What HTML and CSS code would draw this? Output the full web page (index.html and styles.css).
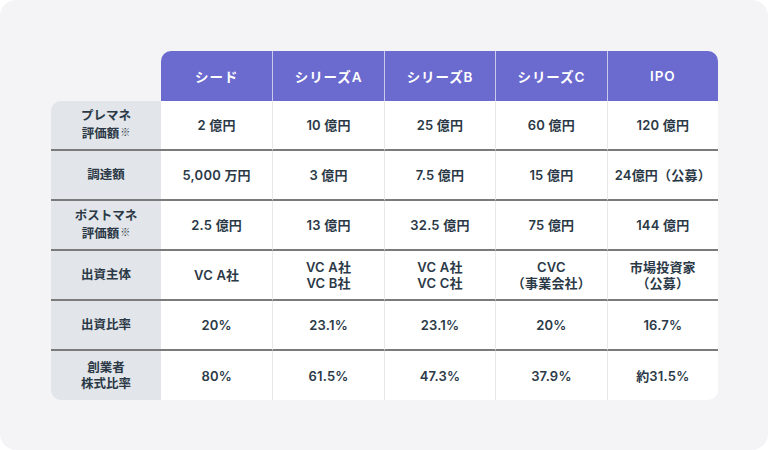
FILE: index.html
```html
<!DOCTYPE html>
<html lang="ja">
<head>
<meta charset="utf-8">
<link rel="stylesheet" href="styles.css">
</head>
<body>
<div class="panel">
  <div class="table">
    <div class="corner"></div>
    <div class="th first">シード</div>
    <div class="th">シリーズA</div>
    <div class="th">シリーズB</div>
    <div class="th">シリーズC</div>
    <div class="th last">IPO</div>

    <div class="lb top"><p>プレマネ<br>評価額<span class="note">※</span></p></div>
    <div class="td">2 億円</div>
    <div class="td">10 億円</div>
    <div class="td">25 億円</div>
    <div class="td">60 億円</div>
    <div class="td">120 億円</div>

    <div class="lb"><p>調達額</p></div>
    <div class="td">5,000 万円</div>
    <div class="td">3 億円</div>
    <div class="td">7.5 億円</div>
    <div class="td">15 億円</div>
    <div class="td">24億円（公募）</div>

    <div class="lb"><p>ポストマネ<br>評価額<span class="note">※</span></p></div>
    <div class="td">2.5 億円</div>
    <div class="td">13 億円</div>
    <div class="td">32.5 億円</div>
    <div class="td">75 億円</div>
    <div class="td">144 億円</div>

    <div class="lb"><p>出資主体</p></div>
    <div class="td">VC A社</div>
    <div class="td"><p>VC A社<br>VC B社</p></div>
    <div class="td"><p>VC A社<br>VC C社</p></div>
    <div class="td"><p>CVC<br>（事業会社）</p></div>
    <div class="td"><p>市場投資家<br>（公募）</p></div>

    <div class="lb"><p>出資比率</p></div>
    <div class="td">20%</div>
    <div class="td">23.1%</div>
    <div class="td">23.1%</div>
    <div class="td">20%</div>
    <div class="td">16.7%</div>

    <div class="lb end bl"><p>創業者<br>株式比率</p></div>
    <div class="td end">80%</div>
    <div class="td end">61.5%</div>
    <div class="td end">47.3%</div>
    <div class="td end">37.9%</div>
    <div class="td end br">約31.5%</div>
  </div>
</div>
</body>
</html>
```

FILE: styles.css
```css
html, body {
  margin: 0;
  padding: 0;
  background: #ffffff;
}
body {
  font-family: "Inter", "Noto Sans CJK JP", sans-serif;
  color: #2b3947;
}
p {
  margin: 0;
}
.panel {
  width: 768px;
  height: 450px;
  box-sizing: border-box;
  background: #f4f4f7;
  border-radius: 16px;
  padding: 51px 50px 0 51px;
}
.table {
  display: grid;
  grid-template-columns: 110px repeat(5, 1fr);
  grid-template-rows: 50px repeat(5, 50px) 49px;
  width: 667px;
}
.th {
  background: #6b6bcf;
  color: #ffffff;
  font-size: 13.5px;
  font-weight: 600;
  display: flex;
  align-items: center;
  justify-content: center;
  border-left: 1px solid #c9c9ec;
  letter-spacing: 0.9px;
}
.th.first {
  border-left: none;
  border-top-left-radius: 10px;
}
.th.last {
  border-top-right-radius: 10px;
}
.lb, .td {
  display: flex;
  align-items: center;
  justify-content: center;
  text-align: center;
  font-weight: 600;
  line-height: 16px;
  box-sizing: border-box;
  border-bottom: 2px solid #7b7b7b;
}
.lb {
  background: #e2e5e9;
  font-size: 12.5px;
}
.lb.top {
  border-top-left-radius: 10px;
}
.td {
  background: #ffffff;
  font-size: 13px;
  letter-spacing: 0.2px;
  border-left: 1px solid #e8e8ea;
}
.lb + .td {
  border-left: none;
}
.end {
  border-bottom: none;
}
.bl {
  border-bottom-left-radius: 10px;
}
.br {
  border-bottom-right-radius: 10px;
}
.note {
  font-family: "Noto Sans CJK JP", sans-serif;
  font-size: 10px;
  font-weight: 600;
  vertical-align: 2px;
  margin-left: 1px;
}
```
